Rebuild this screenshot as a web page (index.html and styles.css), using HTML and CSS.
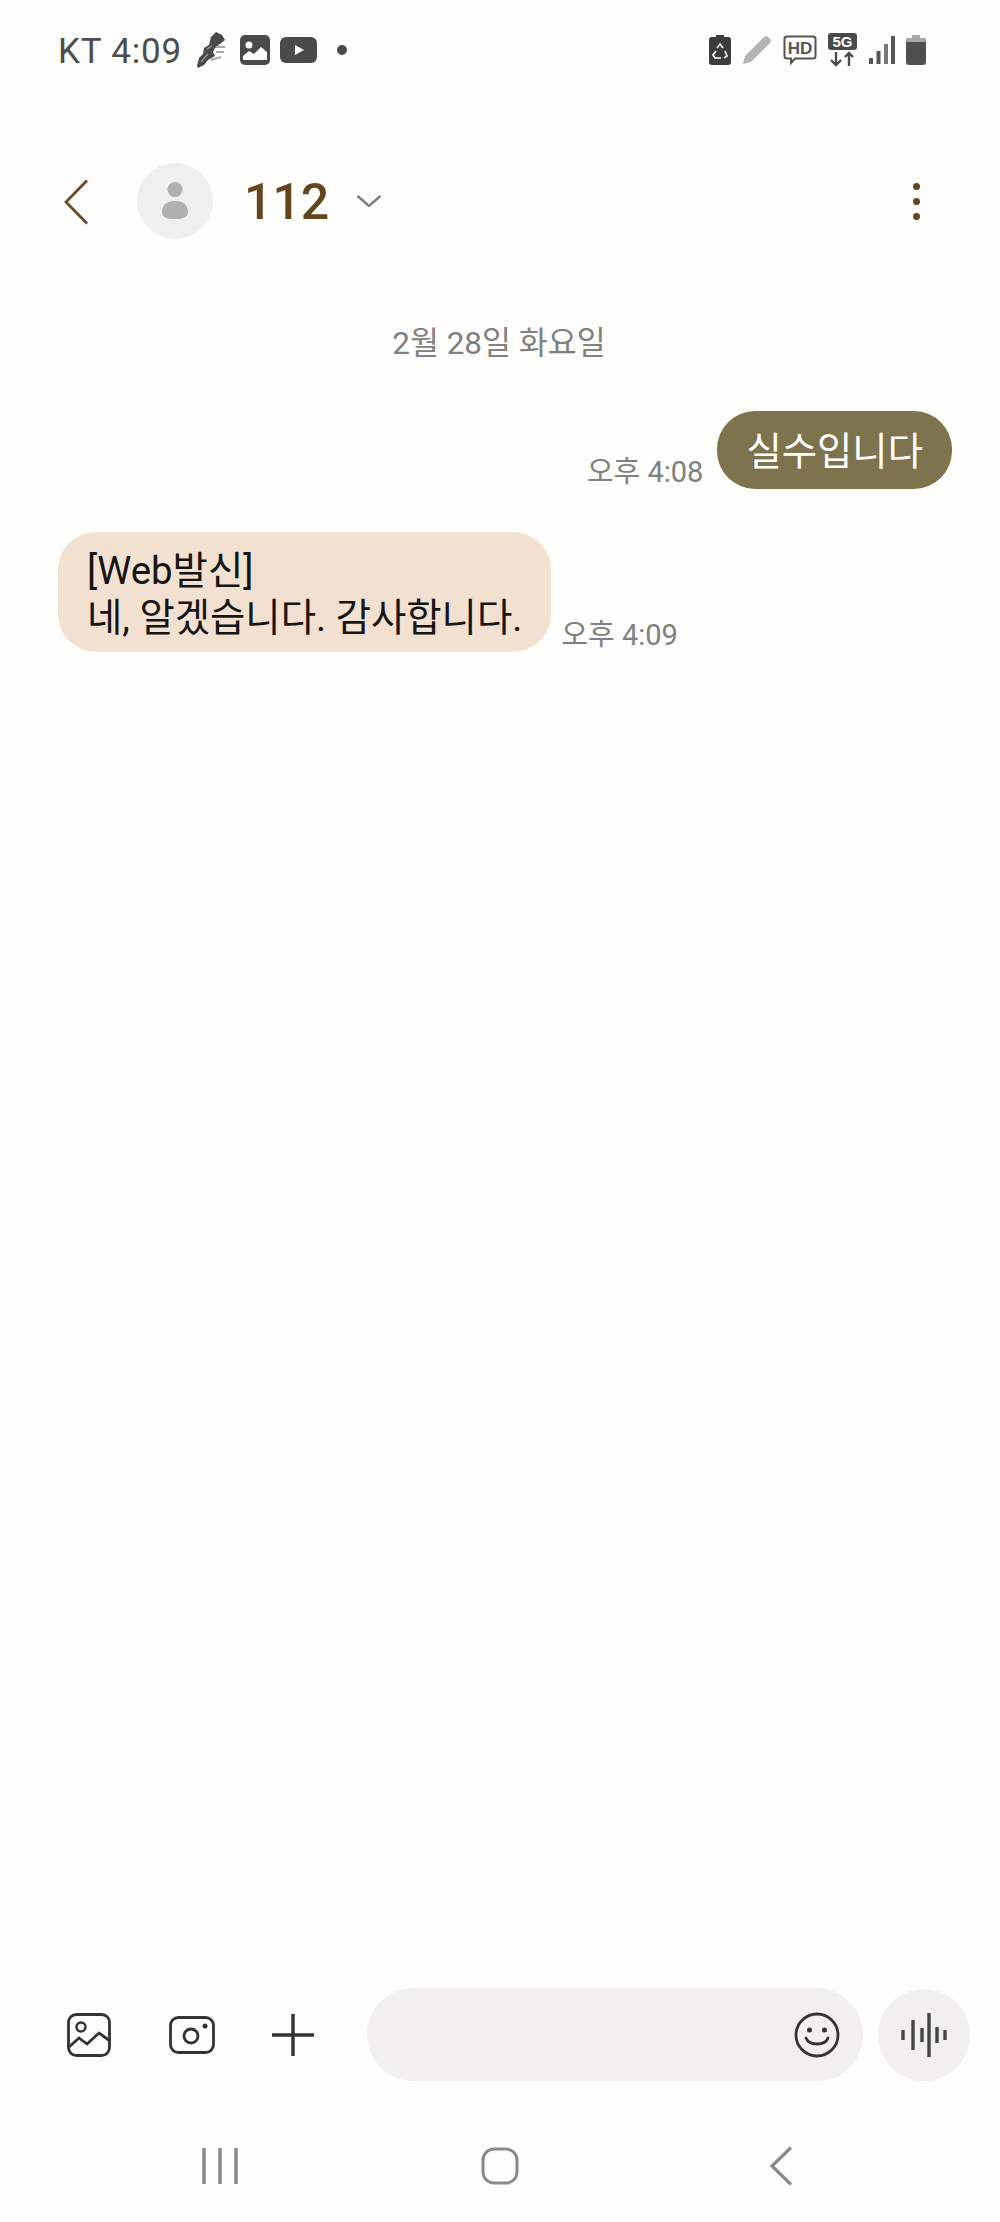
FILE: index.html
```html
<!DOCTYPE html>
<html lang="ko">
<head>
    <meta charset="UTF-8" />
    <meta name="viewport" content="width=device-width, initial-scale=1.0">
    <title>112</title>
    <link rel="stylesheet" href="styles.css">
</head>
<body>

    <!-- status bar -->
    <div class="statusbar">
        <span class="status-text">KT 4:09</span>
        <svg class="st-feather" width="30" height="36" viewBox="0 0 30 36">
            <path d="M1 34 L3 26 L7 22 L8 16 L13 13 L15 5 L20 0 L26 3 L29 8 L24 12 L19 16 L17 20 L19 24 L12 28 L8 33 L2 36 Z" fill="#4a4a4a"/>
            <path d="M20 15 H29 M20 20 H28 M15 28 L25 25" stroke="#aaa" stroke-width="2" fill="none"/>
            <path d="M5 30 L12 22 M11 17 L16 14" stroke="#999" stroke-width="1.2" fill="none"/>
        </svg>
        <svg class="st-image" width="30" height="30" viewBox="0 0 30 30">
            <rect width="30" height="30" rx="5" fill="#4a4a4a"/>
            <circle cx="9" cy="10" r="3.5" fill="#fff"/>
            <path d="M3 25 V21 L9 16 L14 19 L21 12 L27 17 V25 Z" fill="#fff"/>
        </svg>
        <svg class="st-video" width="37" height="26" viewBox="0 0 37 26">
            <rect width="37" height="26" rx="6" fill="#4a4a4a"/>
            <path d="M15 8 L24 13 L15 18 Z" fill="#fff"/>
        </svg>
        <span class="st-dot"></span>

        <span class="status-right">
            <svg width="22" height="30" viewBox="0 0 22 30">
                <path d="M7 0 H15 V2 H19 Q22 2 22 5 V27 Q22 30 19 30 H3 Q0 30 0 27 V5 Q0 2 3 2 H7 Z" fill="#3c3c3c"/>
                <path d="M8 13 L11 9 L14 13 M16 16 L18 21 L15 23 M12 23 H6 L4 20 L7 16" stroke="#fff" stroke-width="1.6" fill="none"/>
            </svg>
            <svg width="30" height="30" viewBox="0 0 30 30">
                <path d="M1 29 L3 21 L22 2 L25 1 L29 5 L28 8 L9 27 Z" fill="#b4b4b4"/>
            </svg>
            <svg width="34" height="30" viewBox="0 0 34 30">
                <path d="M4 1.500 H30 Q32.500 1.500 32.500 4 V21 Q32.500 23.500 30 23.500 H12 L8 28 L8 23.500 H4 Q1.500 23.500 1.500 21 V4 Q1.500 1.500 4 1.500 Z" fill="none" stroke="#555" stroke-width="2"/>
                <text x="17" y="18.500" class="st-hd">HD</text>
            </svg>
            <svg width="30" height="34" viewBox="0 0 30 34">
                <rect width="29" height="17" rx="3" fill="#4a4a4a"/>
                <text x="14.500" y="14" class="st-5g">5G</text>
                <path d="M8 19 V32 M3 27 L8 32 L13 27 M21 33 V20 M17 24 L21 20 L25 24" fill="none" stroke="#4a4a4a" stroke-width="2.400"/>
            </svg>
            <svg width="26" height="28" viewBox="0 0 26 28">
                <rect x="0" y="22" width="4" height="6" fill="#555"/>
                <rect x="7.500" y="15" width="4" height="13" fill="#555"/>
                <rect x="15" y="8" width="4" height="20" fill="#777"/>
                <rect x="22" y="0" width="4" height="28" fill="#555"/>
            </svg>
            <svg width="20" height="30" viewBox="0 0 20 30">
                <path d="M6 0 H14 V3 H17 Q20 3 20 6 V27 Q20 30 17 30 H3 Q0 30 0 27 V6 Q0 3 3 3 H6 Z" fill="#4f4f4f"/>
                <path d="M6 0 H14 V3 H17 Q20 3 20 6 V7 H0 V6 Q0 3 3 3 H6 Z" fill="#a8a8a8"/>
            </svg>
        </span>
    </div>

    <!-- conversation header -->
    <div class="topbar">
        <svg class="back" width="24" height="46" viewBox="0 0 24 46">
            <path d="M23 1.500 L2 23 L23 44.500" fill="none" stroke="#6a4a28" stroke-width="2.800"/>
        </svg>
        <div class="avatar">
            <svg width="28" height="38" viewBox="0 0 28 38">
                <circle cx="14" cy="7.500" r="7.500" fill="#b0b0b0"/>
                <path d="M1 30 C1 22 7 19 14 19 C21 19 27 22 27 30 C27 36 21 37 14 37 C7 37 1 36 1 30 Z" fill="#b0b0b0"/>
            </svg>
        </div>
        <span class="title">112</span>
        <svg class="title-arrow" width="26" height="14" viewBox="0 0 26 14">
            <path d="M1.500 2 L13 12 L24.500 2" fill="none" stroke="#7d7d7d" stroke-width="2.400"/>
        </svg>
        <div class="kebab"><i></i><i></i><i></i></div>
    </div>

    <!-- messages -->
    <div class="messages">
        <div class="date">2월 28일 화요일</div>

        <div class="row sent">
            <span class="time">오후 4:08</span>
            <div class="bubble bubble-sent">실수입니다</div>
        </div>

        <div class="row received">
            <div class="bubble bubble-received">[Web발신]<br>네, 알겠습니다. 감사합니다.</div>
            <span class="time">오후 4:09</span>
        </div>
    </div>

    <!-- composer -->
    <div class="composer">
        <svg class="c-image" width="44" height="44" viewBox="0 0 44 44">
            <rect x="1.500" y="1.500" width="41" height="41" rx="8" fill="none" stroke="#333" stroke-width="2.800"/>
            <circle cx="14" cy="14" r="4.500" fill="none" stroke="#333" stroke-width="2.500"/>
            <path d="M2 34 L12 25 L20 31 L32 20 L43 28" fill="none" stroke="#333" stroke-width="2.800"/>
        </svg>
        <svg class="c-camera" width="46" height="38" viewBox="0 0 46 38">
            <rect x="1.500" y="1.500" width="43" height="35" rx="8" fill="none" stroke="#333" stroke-width="2.800"/>
            <circle cx="22" cy="20" r="7" fill="none" stroke="#333" stroke-width="2.800"/>
            <circle cx="36" cy="10" r="2.500" fill="#333"/>
        </svg>
        <svg class="c-plus" width="42" height="42" viewBox="0 0 42 42">
            <path d="M21 0 V42 M0 21 H42" fill="none" stroke="#333" stroke-width="3.400"/>
        </svg>
        <div class="input">
            <svg width="46" height="46" viewBox="0 0 46 46">
                <circle cx="23" cy="23" r="21" fill="none" stroke="#333" stroke-width="2.800"/>
                <circle cx="15.500" cy="18" r="2.500" fill="#333"/>
                <circle cx="30.500" cy="18" r="2.500" fill="#333"/>
                <path d="M12 26 C15 34 31 34 34 26" fill="none" stroke="#333" stroke-width="2.800" stroke-linecap="round"/>
            </svg>
        </div>
        <div class="voice">
            <svg width="46" height="44" viewBox="0 0 46 44">
                <path d="M2 17 V27 M12 7 V37 M21 15 V29 M28 0 V44 M36 14 V30 M44 17 V27" fill="none" stroke="#444" stroke-width="3.400"/>
            </svg>
        </div>
    </div>

    <!-- android nav -->
    <div class="navbar">
        <svg width="36" height="36" viewBox="0 0 36 36">
            <path d="M2 0 V36 M18 0 V36 M34 0 V36" fill="none" stroke="#8a8a8a" stroke-width="3.500"/>
        </svg>
        <svg class="nav-home" width="38" height="38" viewBox="0 0 38 38">
            <rect x="2" y="2" width="34" height="34" rx="11" fill="none" stroke="#8a8a8a" stroke-width="3"/>
        </svg>
        <svg width="24" height="40" viewBox="0 0 24 40">
            <path d="M22 1.500 L3 20 L22 38.500" fill="none" stroke="#8a8a8a" stroke-width="3.200"/>
        </svg>
    </div>

</body>
</html>
```

FILE: styles.css
```css
html, body {
    margin: 0;
    padding: 0;
}

body {
    width: 1000px;
    height: 2222px;
    display: flex;
    flex-direction: column;
    background-color: #fdfdfb;
    font-family: Roboto, "Noto Sans CJK KR", sans-serif;
    overflow: hidden;
}

svg {
    display: block;
    flex: none;
}

/* status bar */
.statusbar {
    height: 100px;
    display: flex;
    align-items: center;
    padding: 0 74px 0 58px;
}

.status-text {
    font-size: 35px;
    letter-spacing: 0.8px;
    color: #4d4d4d;
    margin: 2px 14px 0 0;
}

.st-image {
    margin-left: 14px;
}

.st-video {
    margin-left: 10px;
}

.st-dot {
    width: 10px;
    height: 10px;
    border-radius: 50%;
    background-color: #4a4a4a;
    margin-left: 20px;
}

.status-right {
    margin-left: auto;
    display: flex;
    align-items: center;
    gap: 11px;
}

.st-hd, .st-5g {
    font-family: "Liberation Sans", sans-serif;
    font-weight: 700;
    text-anchor: middle;
}

.st-hd {
    font-size: 17px;
    fill: #555;
}

.st-5g {
    font-size: 15px;
    fill: #fff;
}

/* conversation header */
.topbar {
    height: 202px;
    display: flex;
    align-items: center;
    padding: 0 80px 0 64px;
}

.back {
    margin-top: 2px;
}

.avatar {
    width: 76px;
    height: 76px;
    border-radius: 50%;
    background-color: #efefef;
    margin-left: 49px;
    display: flex;
    align-items: center;
    justify-content: center;
}

.title {
    font-size: 50px;
    font-weight: 500;
    color: #65451f;
    margin: 2px 0 0 31px;
}

.title-arrow {
    margin-left: 27px;
}

.kebab {
    margin-left: auto;
    display: flex;
    flex-direction: column;
    gap: 8px;
}

.kebab i {
    display: block;
    width: 7px;
    height: 7px;
    border-radius: 50%;
    background-color: #65451f;
}

/* messages */
.messages {
    flex: 1;
    padding: 22px 48px 0 58px;
}

.date {
    text-align: center;
    font-size: 31.500px;
    line-height: 40px;
    color: #808080;
    margin-right: 12px;
}

.row {
    display: flex;
    align-items: flex-end;
}

.sent {
    justify-content: flex-end;
    gap: 14px;
    margin-top: 47px;
}

.received {
    gap: 10px;
    margin-top: 43px;
}

.bubble {
    font-size: 38.400px;
    line-height: 47px;
    border-radius: 38px;
}

.bubble-sent {
    background-color: #7d734c;
    color: #fff;
    padding: 17px 29px 14px;
}

.bubble-received {
    background-color: #f2e0d0;
    color: #151515;
    padding: 15px 29px 11px;
}

.time {
    font-size: 29px;
    line-height: 36px;
    color: #808080;
    margin-bottom: -1px;
}

/* composer */
.composer {
    height: 93px;
    display: flex;
    align-items: center;
    padding: 0 30px 0 67px;
}

.c-camera {
    margin-left: 58px;
}

.c-plus {
    margin-left: 57px;
}

.input {
    width: 498px;
    height: 93px;
    margin-left: 53px;
    border-radius: 47px;
    background-color: #f1f0ee;
    display: flex;
    align-items: center;
    justify-content: flex-end;
    padding-right: 23px;
    box-sizing: border-box;
}

.voice {
    width: 92px;
    height: 92px;
    border-radius: 50%;
    background-color: #f1f0ee;
    margin-left: 15px;
    display: flex;
    align-items: center;
    justify-content: center;
}

/* android nav */
.navbar {
    height: 141px;
    box-sizing: border-box;
    padding: 29px 207px 0 202px;
    display: flex;
    align-items: center;
    justify-content: space-between;
}

.nav-home {
    margin-right: 7px;
}
```
